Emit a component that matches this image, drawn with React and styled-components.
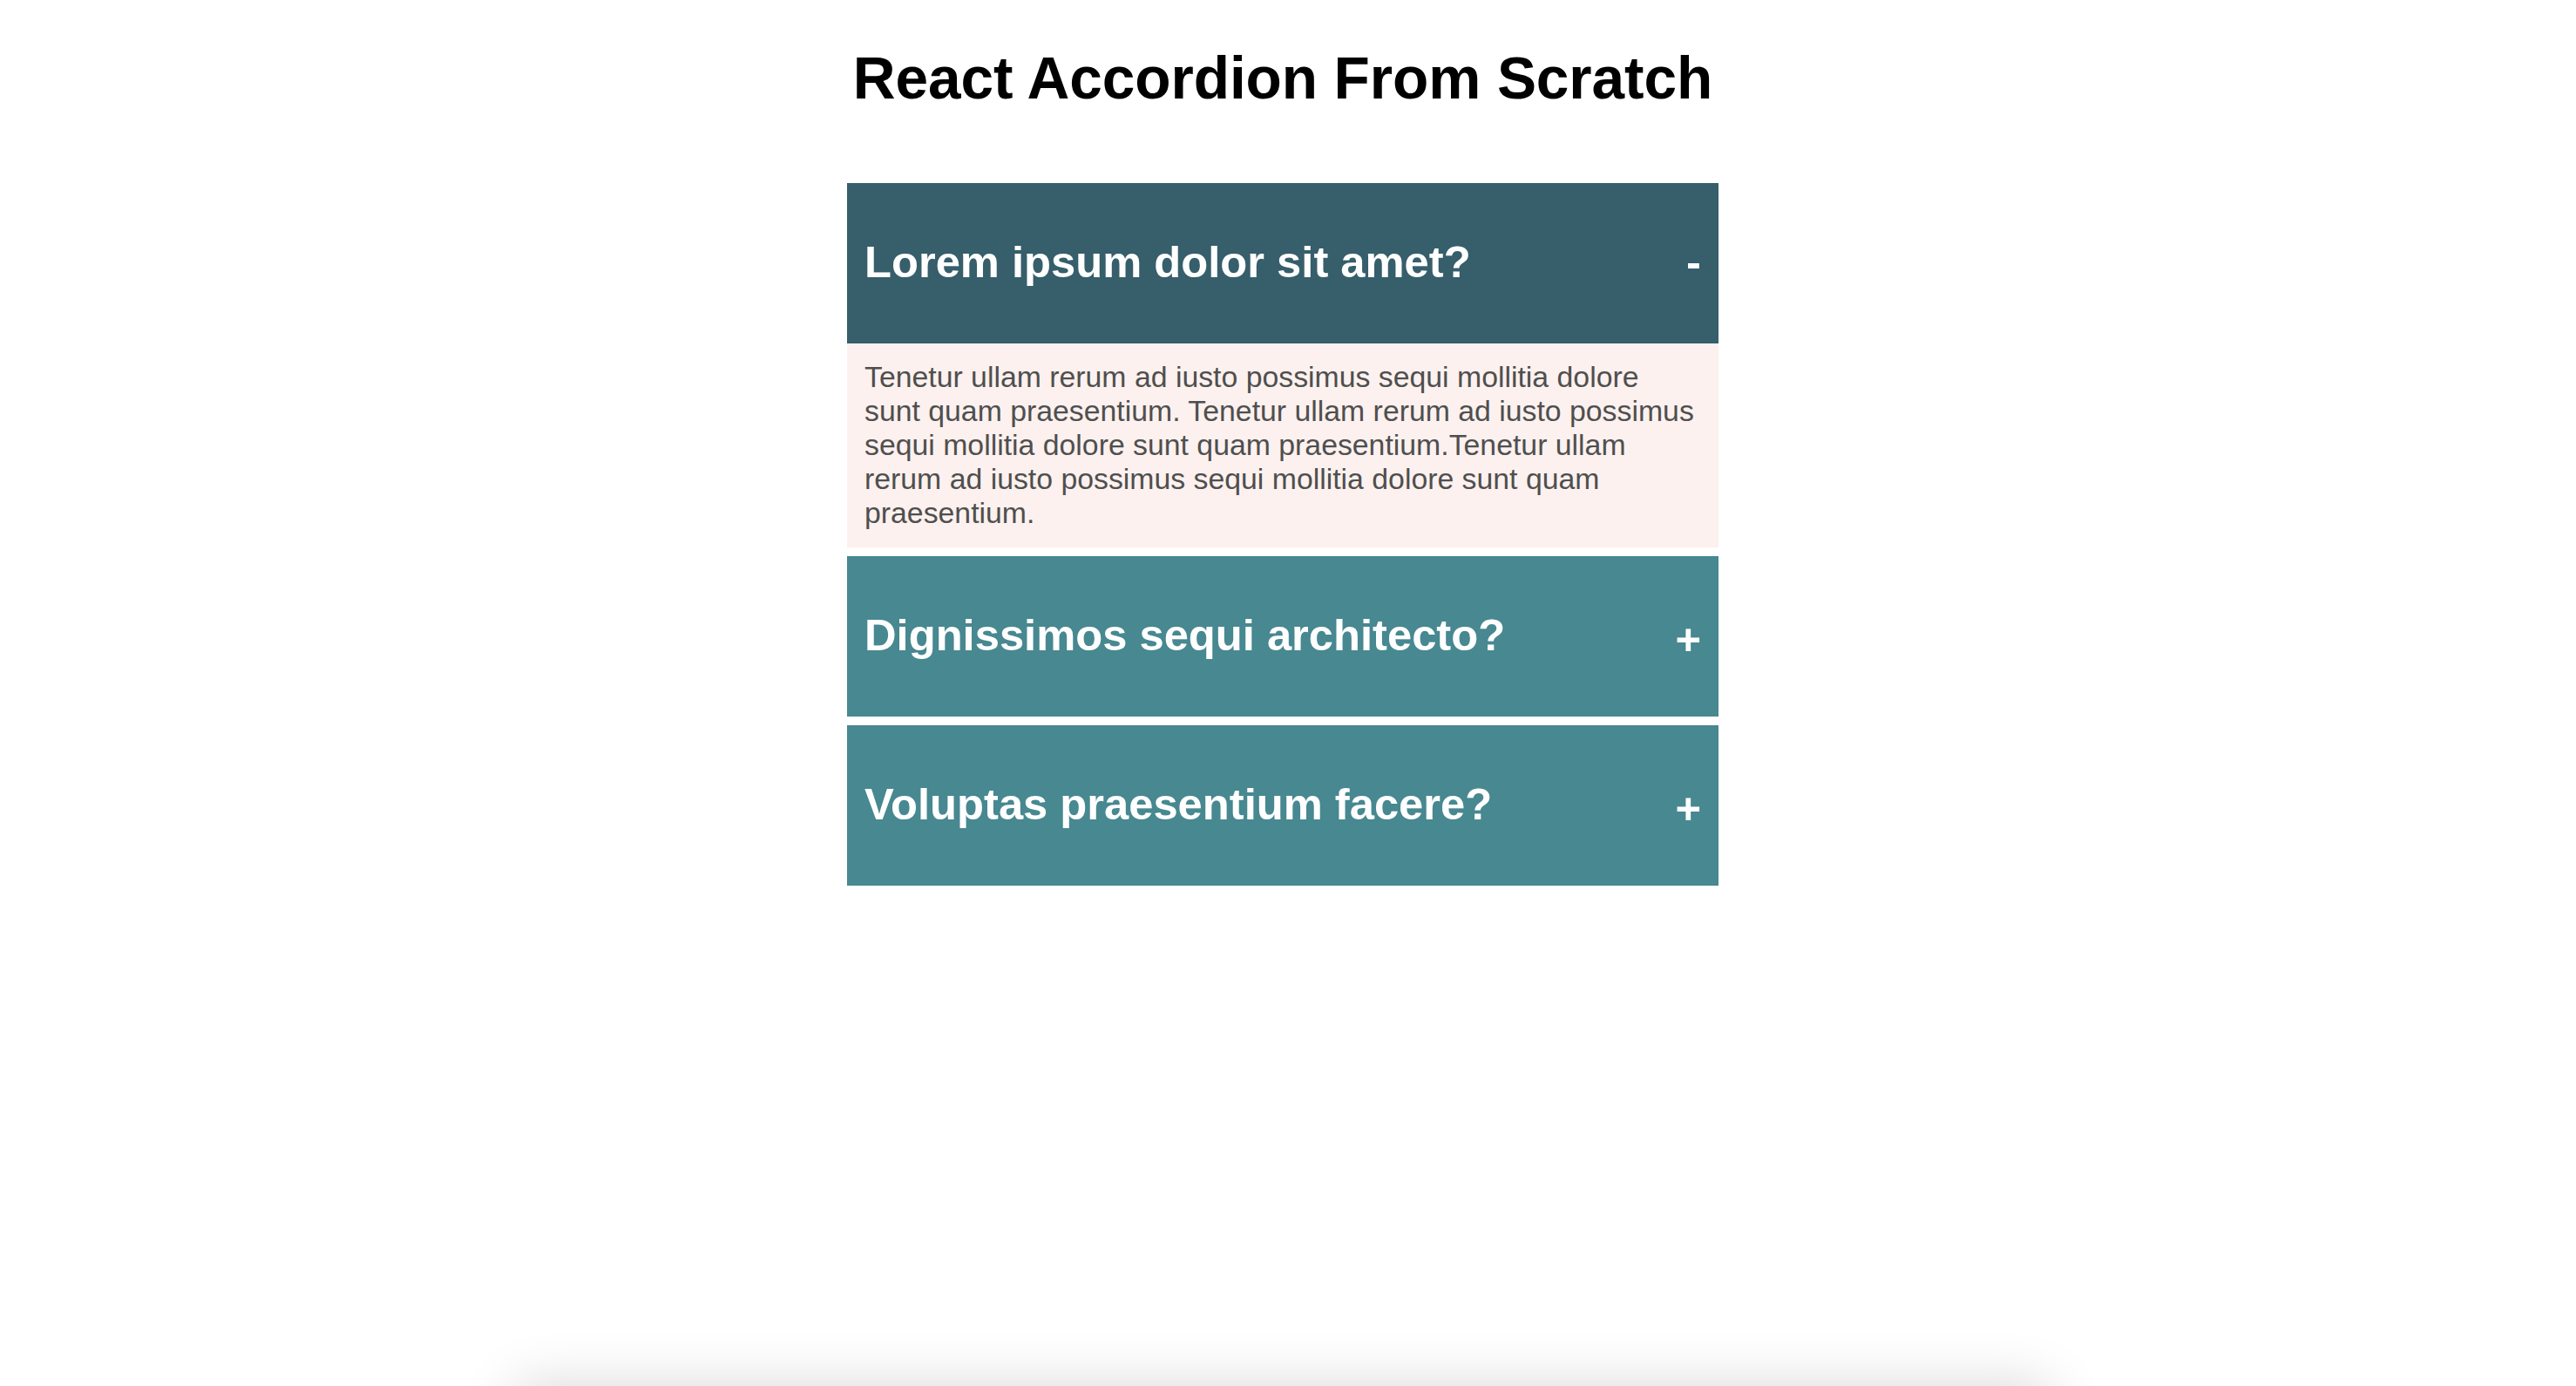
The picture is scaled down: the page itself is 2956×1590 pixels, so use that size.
import React, { useState } from 'react';
import styled, { createGlobalStyle } from 'styled-components';

const GlobalStyle = createGlobalStyle`
    html, body {
        margin: 0;
        padding: 0;
        background: #fff;
        font-family: "Liberation Sans", Arial, Helvetica, sans-serif;
        font-size: 33.8px;
    }
`;

const Page = styled.div`
    min-height: 100vh;
    display: flex;
    flex-direction: column;
    align-items: center;
    padding: 51px 12px 0 0;
    box-sizing: border-box;
`;

const Title = styled.h1`
    margin: 0 0 81px;
    font-size: 67.6px;
    line-height: 78px;
    font-weight: bold;
    color: #000;
    letter-spacing: -0.1px;
`;

const Accordion = styled.div`
    width: 1000px;
    display: flex;
    flex-direction: column;
    gap: 10px;
`;

const Item = styled.div`
    display: flex;
    flex-direction: column;
`;

const Header = styled.div`
    height: 184px;
    padding: 0 20px 3px;
    box-sizing: border-box;
    display: flex;
    align-items: center;
    justify-content: space-between;
    background-color: ${({ $open }) => ($open ? '#365e6b' : '#478891')};
    color: #fff;
    font-size: 50.7px;
    font-weight: bold;
    cursor: pointer;
`;

const Toggle = styled.span`
    font-size: 50.7px;
    font-weight: bold;
    transform: translateY(${({ $open }) => ($open ? '0' : '5px')});
`;

const Content = styled.div`
    height: 234px;
    padding: 19px 20px 0;
    box-sizing: border-box;
    background-color: #fcf1ee;
    color: #4f4f4f;
    font-size: 33.8px;
    line-height: 39px;
`;

const Below = styled.div`
    display: flex;
    justify-content: center;
    padding-right: 12px;
`;

const Shelf = styled.div`
    width: 1760px;
    height: 300px;
    background: #fff;
    box-shadow: 0 0 60px rgba(0, 0, 0, 0.16);
`;

const items = [
    {
        title: 'Lorem ipsum dolor sit amet?',
        content:
            'Tenetur ullam rerum ad iusto possimus sequi mollitia dolore sunt quam praesentium. Tenetur ullam rerum ad iusto possimus sequi mollitia dolore sunt quam praesentium.Tenetur ullam rerum ad iusto possimus sequi mollitia dolore sunt quam praesentium.',
    },
    {
        title: 'Dignissimos sequi architecto?',
        content:
            'Aperiam ab atque incidunt dolores ullam est, earum ipsa recusandae velit cumque. Aperiam ab atque incidunt dolores ullam est, earum ipsa recusandae velit cumque.',
    },
    {
        title: 'Voluptas praesentium facere?',
        content:
            'Blanditiis aliquid adipisci quisquam reiciendis voluptates itaque.',
    },
];

const AccordionItem = ({ title, content, open, onToggle }) => {
    return (
        <Item>
            <Header $open={open} onClick={onToggle}>
                <span>{title}</span>
                <Toggle $open={open}>{open ? '-' : '+'}</Toggle>
            </Header>
            {open && <Content>{content}</Content>}
        </Item>
    );
};

const App = () => {
    const [openIndex, setOpenIndex] = useState(0);

    return (
        <>
            <GlobalStyle />
            <Page>
                <Title>React Accordion From Scratch</Title>
                <Accordion>
                    {items.map((item, i) => (
                        <AccordionItem
                            key={item.title}
                            title={item.title}
                            content={item.content}
                            open={openIndex === i}
                            onToggle={() => setOpenIndex(openIndex === i ? null : i)}
                        />
                    ))}
                </Accordion>
            </Page>
            <Below>
                <Shelf />
            </Below>
        </>
    );
};

export default App;
